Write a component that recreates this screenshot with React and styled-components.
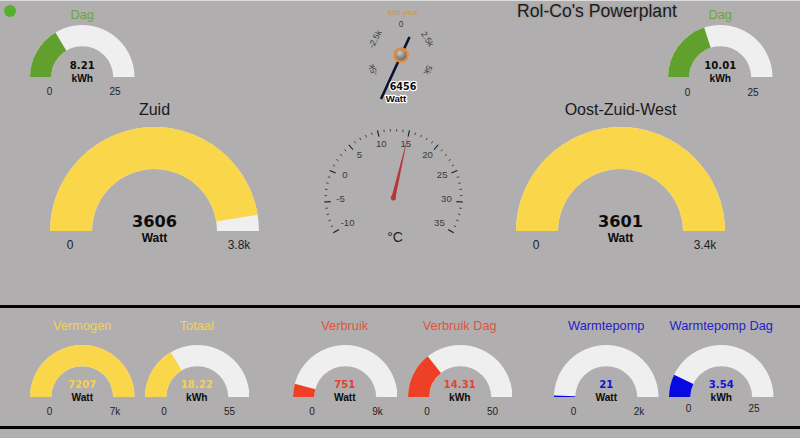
import React from 'react';
import styled, { createGlobalStyle } from 'styled-components';

const GlobalStyle = createGlobalStyle`
  html, body {
    margin: 0;
    padding: 0;
    background: #b0aeae;
  }
  body {
    font-family: "Liberation Sans", Arial, sans-serif;
    overflow: hidden;
  }
`;

const Page = styled.div`
  position: relative;
  width: 800px;
  height: 438px;
  background: #b0aeae;
  box-shadow: inset 0 1px 0 #dcdcdc;
  overflow: hidden;
`;

const StatusDot = styled.span`
  position: absolute;
  left: 4px;
  top: 5px;
  width: 12px;
  height: 12px;
  border-radius: 50%;
  background: #55b030;
`;

const TopSection = styled.section`
  display: flex;
  height: 305px;
`;

const SideColumn = styled.div`
  display: flex;
  flex-direction: column;
  width: 320px;
  flex: none;
`;

const CenterColumn = styled.div`
  display: flex;
  flex-direction: column;
  width: 160px;
  flex: none;
`;

const HeaderRow = styled.div`
  display: flex;
  align-items: flex-start;
`;

const Heading = styled.h1`
  margin: 1px 0 0 37px;
  width: 151px;
  flex: none;
  font-size: 17.6px;
  line-height: 20px;
  font-weight: 400;
  color: #1c1c1c;
  white-space: nowrap;
  text-shadow: 0 0 3px rgba(0, 0, 0, 0.18);
`;

const BottomSection = styled.section`
  display: flex;
  height: 124px;
  box-sizing: border-box;
  padding-top: 10px;
  border-top: 3px solid #050505;
  border-bottom: 3px solid #050505;
`;

const GaugeGroup = styled.div`
  display: flex;
  gap: ${props => props.$gap}px;
  margin-left: ${props => props.$left}px;
`;

const GaugeWrap = styled.div`
  flex: none;
  width: ${props => (props.$big ? 209 : 104.5)}px;
  margin-left: ${props => props.$left || 0}px;
  margin-top: ${props => props.$top || 0}px;
`;

const GaugeTitle = styled.div`
  display: flex;
  justify-content: center;
  white-space: nowrap;
  font-size: ${props => (props.$big ? 16 : 12.8)}px;
  line-height: ${props => (props.$big ? 20 : 16)}px;
  color: ${props => props.$color};
  margin-bottom: ${props => props.$gap}px;
`;

const Dial = styled.div`
  position: relative;
  height: ${props => (props.$big ? 104.5 : 52.25)}px;

  svg {
    display: block;
    width: 100%;
    height: 100%;
  }
`;

const Readout = styled.div`
  position: absolute;
  left: 0;
  right: 0;
  bottom: ${props => (props.$big ? -14.7 : -7.5)}px;
  text-align: center;
  font-weight: 700;
`;

const ReadoutValue = styled.div`
  font-family: "DejaVu Sans", Verdana, sans-serif;
  font-size: ${props => (props.$big ? 16.2 : 10.1)}px;
  line-height: ${props => (props.$big ? 18 : 13)}px;
  color: ${props => props.$color};
`;

const ReadoutUnit = styled.div`
  font-size: ${props => (props.$big ? 12 : 10.2)}px;
  line-height: ${props => (props.$big ? 15 : 13)}px;
  color: #0c0c0c;
`;

const Scale = styled.div`
  display: flex;
  justify-content: space-between;
  margin-top: ${props => props.$gap}px;
  font-size: ${props => (props.$big ? 12 : 10)}px;
  line-height: ${props => (props.$big ? 14 : 12)}px;
  color: #222;
`;

const ScaleLabel = styled.span`
  display: flex;
  justify-content: center;
  width: ${props => (props.$big ? 40 : 39)}px;
  white-space: nowrap;
`;

const DrawnGauge = styled.svg`
  display: block;
  flex: none;
  width: 160px;
  height: ${props => props.$height}px;
  font-family: "Liberation Sans", Arial, sans-serif;
`;

const TickText = styled.text`
  font-size: ${props => props.$size}px;
  fill: ${props => props.$fill};
  text-anchor: middle;
  dominant-baseline: central;
`;

const HaloText = styled.text`
  font-family: ${props => props.$family};
  font-size: 9.6px;
  font-weight: 700;
  fill: #0c0c0c;
  stroke: #fff;
  stroke-width: 2.4px;
  paint-order: stroke;
  stroke-linejoin: round;
  text-anchor: middle;
  dominant-baseline: central;
`;

const YELLOW = '#fad64b';
const GREEN = '#62a02e';
const RED = '#ee4026';
const BLUE = '#0808e0';
const TRACK = '#efefef';

const bandPath = (from, to, outer, inner) => {
  const point = (radius, t) => {
    const a = Math.PI * (1 - t);
    return `${outer + radius * Math.cos(a)} ${outer - radius * Math.sin(a)}`;
  };
  return `M${point(outer, from)} A${outer} ${outer} 0 0 1 ${point(outer, to)} L${point(inner, to)} A${inner} ${inner} 0 0 0 ${point(inner, from)} Z`;
};

const Gauge = ({
  title, value, unit, min = '0', max, ratio, color, titleColor, valueColor = '#0c0c0c',
  big, titleGap = 2, scaleGap = 9, left, top
}) => {
  const outer = big ? 104.5 : 52.25;
  const inner = big ? 62.5 : 31;
  const t = Math.min(ratio, 1);
  return (
    <GaugeWrap $big={big} $left={left} $top={top}>
      <GaugeTitle $big={big} $color={titleColor} $gap={titleGap}>{title}</GaugeTitle>
      <Dial $big={big}>
        <svg viewBox={`0 0 ${outer * 2} ${outer}`}>
          <path d={bandPath(0, 1, outer, inner)} fill={TRACK} />
          <path d={bandPath(0, t, outer, inner)} fill={color} />
        </svg>
        <Readout $big={big}>
          <ReadoutValue $big={big} $color={valueColor}>{value}</ReadoutValue>
          <ReadoutUnit $big={big}>{unit}</ReadoutUnit>
        </Readout>
      </Dial>
      <Scale $big={big} $gap={scaleGap}>
        <ScaleLabel $big={big}>{min}</ScaleLabel>
        <ScaleLabel $big={big}>{max}</ScaleLabel>
      </Scale>
    </GaugeWrap>
  );
};

const MiniPlus = () => (
  <DrawnGauge $height={108} viewBox="320 0 160 108">
    <defs>
      <radialGradient id="hub" cx="40%" cy="35%" r="75%">
        <stop offset="0%" stopColor="#c9c9c9" />
        <stop offset="100%" stopColor="#4a4a4a" />
      </radialGradient>
    </defs>
    <TickText x={403} y={12} $size={8} $fill="#d9924c">Min-plus</TickText>
    <TickText x={401} y={23.5} $size={8.5} $fill="#3c3c3c">0</TickText>
    <TickText x={375} y={39} $size={8.5} $fill="#3c3c3c" transform="rotate(-62 375 39)">-2.5k</TickText>
    <TickText x={427.5} y={39} $size={8.5} $fill="#3c3c3c" transform="rotate(58 427.5 39)">2.5k</TickText>
    <TickText x={373} y={70} $size={8.5} $fill="#3c3c3c" transform="rotate(-115 373 70)">-5k</TickText>
    <TickText x={428} y={70} $size={8.5} $fill="#3c3c3c" transform="rotate(115 428 70)">5k</TickText>
    <line x1={409.5} y1={37} x2={381} y2={99} stroke="#07142e" strokeWidth={2.6} />
    <circle cx={401} cy={55} r={6.6} fill="url(#hub)" stroke="#e78a33" strokeWidth={2.4} />
    <HaloText x={403} y={86.5} $family='"DejaVu Sans", Verdana, sans-serif'>6456</HaloText>
    <HaloText x={396} y={98.5} $family='"Liberation Sans", Arial, sans-serif'>Watt</HaloText>
  </DrawnGauge>
);

const CX = 393.5;
const CY = 198;

const polar = (value, radius) => {
  const a = ((value - 12.5) * 16) / 3 * (Math.PI / 180);
  return [CX + radius * Math.sin(a), CY - radius * Math.cos(a)];
};

const MAJORS = [-10, -5, 0, 5, 10, 15, 20, 25, 30, 35];
const MINORS = [];
for (let v = -10; v < 35; v += 1) {
  if ((v + 10) % 5 !== 0) MINORS.push(v);
}

const Thermometer = () => {
  const [tipX, tipY] = [407.7, 136.7];
  return (
    <DrawnGauge $height={142} viewBox="320 108 160 142">
      {MINORS.map(v => {
        const [x1, y1] = polar(v, 66.5);
        const [x2, y2] = polar(v, 69);
        return <line key={v} x1={x1} y1={y1} x2={x2} y2={y2} stroke="#3a3a3a" strokeWidth={0.9} />;
      })}
      {MAJORS.map(v => {
        const [x1, y1] = polar(v, 63);
        const [x2, y2] = polar(v, 69.5);
        const [tx, ty] = polar(v, 53);
        return (
          <g key={v}>
            <line x1={x1} y1={y1} x2={x2} y2={y2} stroke="#1c1c1c" strokeWidth={1.1} />
            <TickText x={tx} y={ty - 2.5} $size={9.6} $fill="#3a3a3a">{v}</TickText>
          </g>
        );
      })}
      <polygon points={`${tipX},${tipY} 391.4,197.4 395.4,198.2`} fill="#b5383c" />
      <circle cx={393.4} cy={197.8} r={2.6} fill="#b5383c" />
      <TickText x={395} y={236.5} $size={14} $fill="#222">°C</TickText>
    </DrawnGauge>
  );
};

export default function App() {
  return (
    <Page>
      <GlobalStyle />
      <StatusDot />
      <TopSection>
        <SideColumn>
          <Gauge
            title="Dag" value="8.21" unit="kWh" max="25" ratio={8.21 / 25}
            color={GREEN} titleColor="#6fa53c" left={30} top={7}
          />
          <Gauge
            big title="Zuid" value="3606" unit="Watt" max="3.8k" ratio={3606 / 3800}
            color={YELLOW} titleColor="#1a1a1a" left={50} top={1.5} titleGap={7} scaleGap={7}
          />
        </SideColumn>
        <CenterColumn>
          <MiniPlus />
          <Thermometer />
        </CenterColumn>
        <SideColumn>
          <HeaderRow>
            <Heading>Rol-Co's Powerplant</Heading>
            <Gauge
              title="Dag" value="10.01" unit="kWh" max="25" ratio={10.01 / 25}
              color={GREEN} titleColor="#6fa53c" top={7} scaleGap={10}
            />
          </HeaderRow>
          <Gauge
            big title="Oost-Zuid-West" value="3601" unit="Watt" max="3.4k" ratio={1}
            color={YELLOW} titleColor="#1a1a1a" left={36} top={0.5} titleGap={7} scaleGap={7}
          />
        </SideColumn>
      </TopSection>
      <BottomSection>
        <GaugeGroup $left={30} $gap={10}>
          <Gauge title="Vermogen" value="7207" unit="Watt" max="7k" ratio={1}
            color={YELLOW} titleColor="#f2d357" valueColor="#f4d24e" titleGap={10.7} />
          <Gauge title="Totaal" value="18.22" unit="kWh" max="55" ratio={18.22 / 55}
            color={YELLOW} titleColor="#f2d357" valueColor="#f4d24e" titleGap={10.7} />
        </GaugeGroup>
        <GaugeGroup $left={43.5} $gap={10.5}>
          <Gauge title="Verbruik" value="751" unit="Watt" max="9k" ratio={751 / 9000}
            color={RED} titleColor="#e2533d" valueColor="#e2432e" titleGap={10.7} />
          <Gauge title="Verbruik Dag" value="14.31" unit="kWh" max="50" ratio={14.31 / 50}
            color={RED} titleColor="#e2533d" valueColor="#e2432e" titleGap={10.7} />
        </GaugeGroup>
        <GaugeGroup $left={42} $gap={10.5}>
          <Gauge title="Warmtepomp" value="21" unit="Watt" max="2k" ratio={21 / 2000}
            color={BLUE} titleColor="#2222cc" valueColor="#1212d8" titleGap={10.7} />
          <Gauge title="Warmtepomp Dag" value="3.54" unit="kWh" max="25" ratio={3.54 / 25}
            color={BLUE} titleColor="#2222cc" valueColor="#1212d8" titleGap={10.7} scaleGap={6} />
        </GaugeGroup>
      </BottomSection>
    </Page>
  );
}
